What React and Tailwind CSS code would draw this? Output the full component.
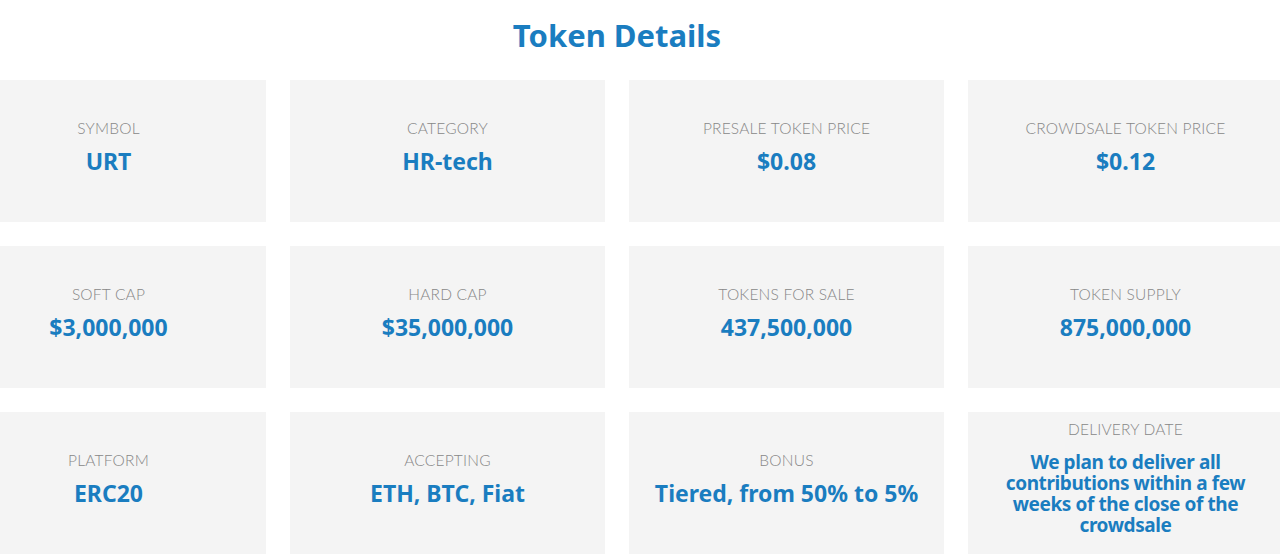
import React from 'react';

const items = [
  { label: 'SYMBOL', value: 'URT' },
  { label: 'CATEGORY', value: 'HR-tech' },
  { label: 'PRESALE TOKEN PRICE', value: '$0.08' },
  { label: 'CROWDSALE TOKEN PRICE', value: '$0.12' },
  { label: 'SOFT CAP', value: '$3,000,000' },
  { label: 'HARD CAP', value: '$35,000,000' },
  { label: 'TOKENS FOR SALE', value: '437,500,000' },
  { label: 'TOKEN SUPPLY', value: '875,000,000' },
  { label: 'PLATFORM', value: 'ERC20' },
  { label: 'ACCEPTING', value: 'ETH, BTC, Fiat' },
  { label: 'BONUS', value: 'Tiered, from 50% to 5%' },
  { label: 'DELIVERY DATE', value: 'We plan to deliver all contributions within a few weeks of the close of the crowdsale', small: true },
];

const DetailCard = ({ label, value, small }) => (
  <div className="bg-[#f4f4f4] h-[142px] flex flex-col items-center justify-center text-center px-[18px] pb-[12px]">
    <div className="text-[15.5px] font-light text-[#878787] leading-[20px] tracking-[0.2px]" style={{ fontFamily: 'Lato, sans-serif' }}>
      {label}
    </div>
    {small ? (
      <div className="mt-[13px] text-[19px] font-bold text-[#1a7dc0] leading-[21px] tracking-[-0.4px]">{value}</div>
    ) : (
      <div className="mt-[13px] text-[23px] font-bold text-[#1a7dc0] leading-[21px]">{value}</div>
    )}
  </div>
);

export default function App() {
  return (
    <div className="w-[1280px] h-[555px] overflow-hidden bg-white" style={{ fontFamily: '"Noto Sans", Lato, sans-serif' }}>
      <div className="w-[1332px] -ml-[49px]">
        <h2 className="pt-[14px] h-[80px] text-center text-[31px] font-bold text-[#1a7dc0] leading-[42px]">
          Token Details
        </h2>
        <div className="grid grid-cols-4 gap-x-[24px] gap-y-[24px]">
          {items.map((it) => (
            <DetailCard key={it.label} {...it} />
          ))}
        </div>
      </div>
    </div>
  );
}
